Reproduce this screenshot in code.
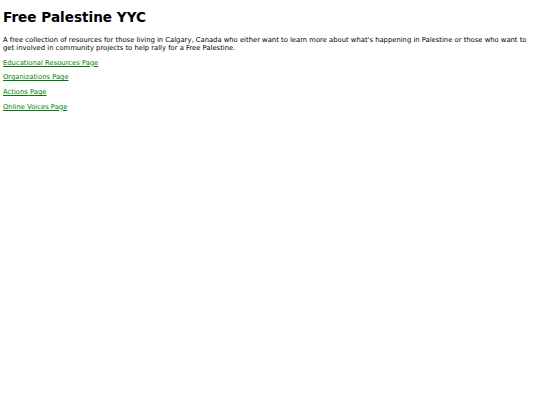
export default function App() {
  const links = [
    "Educational Resources Page",
    "Organizations Page",
    "Actions Page",
    "Online Voices Page",
  ];
  return (
    <div className="px-[3px] pt-[7px] font-['Verdana','DejaVu_Sans',sans-serif] text-black">
      <h1 className="text-[13.6px] leading-[20px] font-bold">Free Palestine YYC</h1>
      <p className="mt-[9px] pr-[10px] text-[6.8px] leading-[8px]">
        A free collection of resources for those living in Calgary, Canada who either want to learn more about what's happening in Palestine or those who want to get involved in community projects to help rally for a Free Palestine.
      </p>
      {links.map((l) => (
        <p key={l} className="mt-[6.7px] text-[6.8px] leading-[8px]">
          <a href="#" className="text-[#008000] underline">{l}</a>
        </p>
      ))}
    </div>
  );
}
